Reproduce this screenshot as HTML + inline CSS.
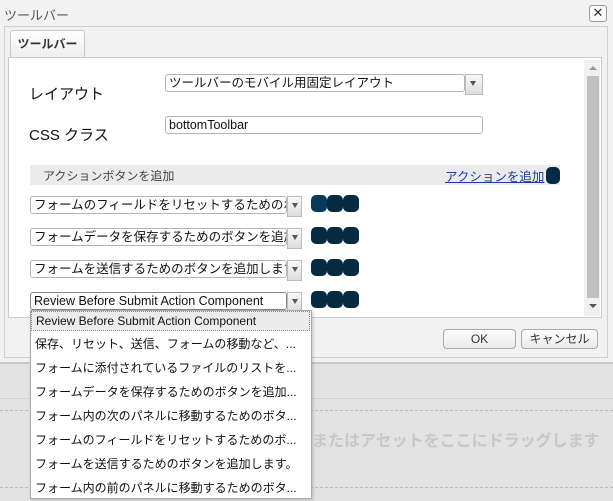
<!DOCTYPE html>
<html><head><meta charset="utf-8"><style>
*{margin:0;padding:0;box-sizing:border-box}
body{width:613px;height:499px;overflow:hidden;background:#e3e3e3;font-family:"Liberation Sans","Noto Sans CJK JP",sans-serif;position:relative;font-size:13px;color:#111}
.a{position:absolute}
.sel{position:absolute;height:18px;border:1px solid #b5b5b5;border-radius:3px;background:#fff;font-size:12.5px;line-height:16px;padding-left:3px;white-space:nowrap;overflow:hidden}
.arr{position:absolute;width:15px;height:21px;border:1px solid #bbb;background:linear-gradient(#f8f8f8,#ddd)}
.arr:after{content:"";position:absolute;left:4px;top:6px;border-left:3px solid transparent;border-right:3px solid transparent;border-top:5px solid #555}
.ic{position:absolute;width:16px;height:17px;background:#062a42;border-radius:5px}
.it{position:absolute;left:31px;width:279px;height:24px;line-height:22px;padding-left:4px;font-size:12px;white-space:nowrap}
.btn{position:absolute;height:20px;border:1px solid #aaa;border-radius:4px;background:linear-gradient(#fdfdfd,#eaeaea);text-align:center;line-height:18px;font-size:12px;color:#333}
</style></head><body>
<div class="a" style="left:0;top:0;width:613px;height:364px;background:#f2f2f2;border-bottom:2px solid #c8c8c8"></div>
<div class="a" style="left:4px;top:5px;font-size:13px;color:#555">ツールバー</div>
<div class="a" style="left:589px;top:5px;width:18px;height:17px;border:1px solid #999;border-radius:3px;background:#fafafa;font-size:13px;text-align:center;line-height:14px;color:#333">✕</div>
<div class="a" style="left:4px;top:26px;width:604px;height:332px;border:1px solid #d0d0d0;background:#f2f2f2"></div>
<div class="a" style="left:10px;top:30px;width:75px;height:28px;border:1px solid #c8c8c8;border-bottom:none;border-radius:3px 3px 0 0;background:linear-gradient(#fff,#eee);font-size:12px;font-weight:bold;text-align:center;line-height:27px;color:#333">ツールバー</div>
<div class="a" style="left:8px;top:57px;width:594px;height:261px;border:1px solid #ccc;background:#fff"></div>
<div class="a" style="left:584px;top:60px;width:16px;height:256px;background:#f0f0f0"></div>
<div class="a" style="left:587px;top:76px;width:12px;height:222px;background:#c0c0c0"></div>
<div class="a" style="left:589px;top:66px;border-left:4px solid transparent;border-right:4px solid transparent;border-bottom:4px solid #999"></div>
<div class="a" style="left:589px;top:304px;border-left:4px solid transparent;border-right:4px solid transparent;border-top:4px solid #555"></div>

<div class="a" style="left:29px;top:83px;font-size:15px">レイアウト</div>
<div class="sel" style="left:165px;top:74px;width:300px">ツールバーのモバイル用固定レイアウト</div>
<div class="arr" style="left:465px;top:74px;width:18px"></div>
<div class="a" style="left:29px;top:124px;font-size:15px">CSS クラス</div>
<div class="sel" style="left:165px;top:116px;width:318px">bottomToolbar</div>

<div class="a" style="left:30px;top:165px;width:530px;height:20px;background:#ebebeb"></div>
<div class="a" style="left:43px;top:167px;font-size:12px;color:#444">アクションボタンを追加</div>
<div class="a" style="left:445px;top:166px;font-size:12.5px;color:#1a3e9a;text-decoration:underline">アクションを追加</div>
<div class="ic" style="left:546px;top:167px;width:14px"></div>

<div class="sel" style="left:30px;top:196px;width:257px">フォームのフィールドをリセットするためのボ</div><div class="arr" style="left:287px;top:196px"></div>
<div class="ic" style="left:311px;top:195px;background:#053a5a"></div><div class="ic" style="left:327px;top:195px"></div><div class="ic" style="left:343px;top:195px"></div>
<div class="sel" style="left:30px;top:228px;width:257px">フォームデータを保存するためのボタンを追加</div><div class="arr" style="left:287px;top:228px"></div>
<div class="ic" style="left:311px;top:227px"></div><div class="ic" style="left:327px;top:227px"></div><div class="ic" style="left:343px;top:227px"></div>
<div class="sel" style="left:30px;top:260px;width:257px">フォームを送信するためのボタンを追加します</div><div class="arr" style="left:287px;top:260px"></div>
<div class="ic" style="left:311px;top:259px"></div><div class="ic" style="left:327px;top:259px"></div><div class="ic" style="left:343px;top:259px"></div>
<div class="sel" style="left:30px;top:292px;width:257px;border-color:#888">Review Before Submit Action Component</div><div class="arr" style="left:287px;top:292px"></div>
<div class="ic" style="left:311px;top:291px"></div><div class="ic" style="left:327px;top:291px"></div><div class="ic" style="left:343px;top:291px"></div>

<div class="btn" style="left:443px;top:329px;width:73px">OK</div>
<div class="btn" style="left:521px;top:329px;width:77px">キャンセル</div>

<div class="a" style="left:0;top:398px;width:613px;height:1px;background:#cdd6de"></div>
<div class="a" style="left:0;top:410px;width:613px;border-top:1px dashed #bbb"></div>
<div class="a" style="left:0;top:487px;width:613px;border-top:1px dashed #bbb"></div>
<div class="a" style="left:296px;top:427px;font-size:16px;font-weight:bold;color:#c8c8c8;white-space:nowrap">トまたはアセットをここにドラッグします</div>

<div class="a" style="left:30px;top:310px;width:282px;height:189px;background:#fff;border:1px solid #aaa;box-shadow:1px 1px 3px rgba(0,0,0,.2)"></div>
<div class="it" style="top:311px;height:20px;line-height:18px;background:#ececec;border:1px dotted #888">Review Before Submit Action Component</div>
<div class="it" style="top:333px">保存、リセット、送信、フォームの移動など、...</div>
<div class="it" style="top:357px">フォームに添付されているファイルのリストを...</div>
<div class="it" style="top:381px">フォームデータを保存するためのボタンを追加...</div>
<div class="it" style="top:405px">フォーム内の次のパネルに移動するためのボタ...</div>
<div class="it" style="top:429px">フォームのフィールドをリセットするためのボ...</div>
<div class="it" style="top:453px">フォームを送信するためのボタンを追加します。</div>
<div class="it" style="top:477px">フォーム内の前のパネルに移動するためのボタ...</div>
</body></html>
